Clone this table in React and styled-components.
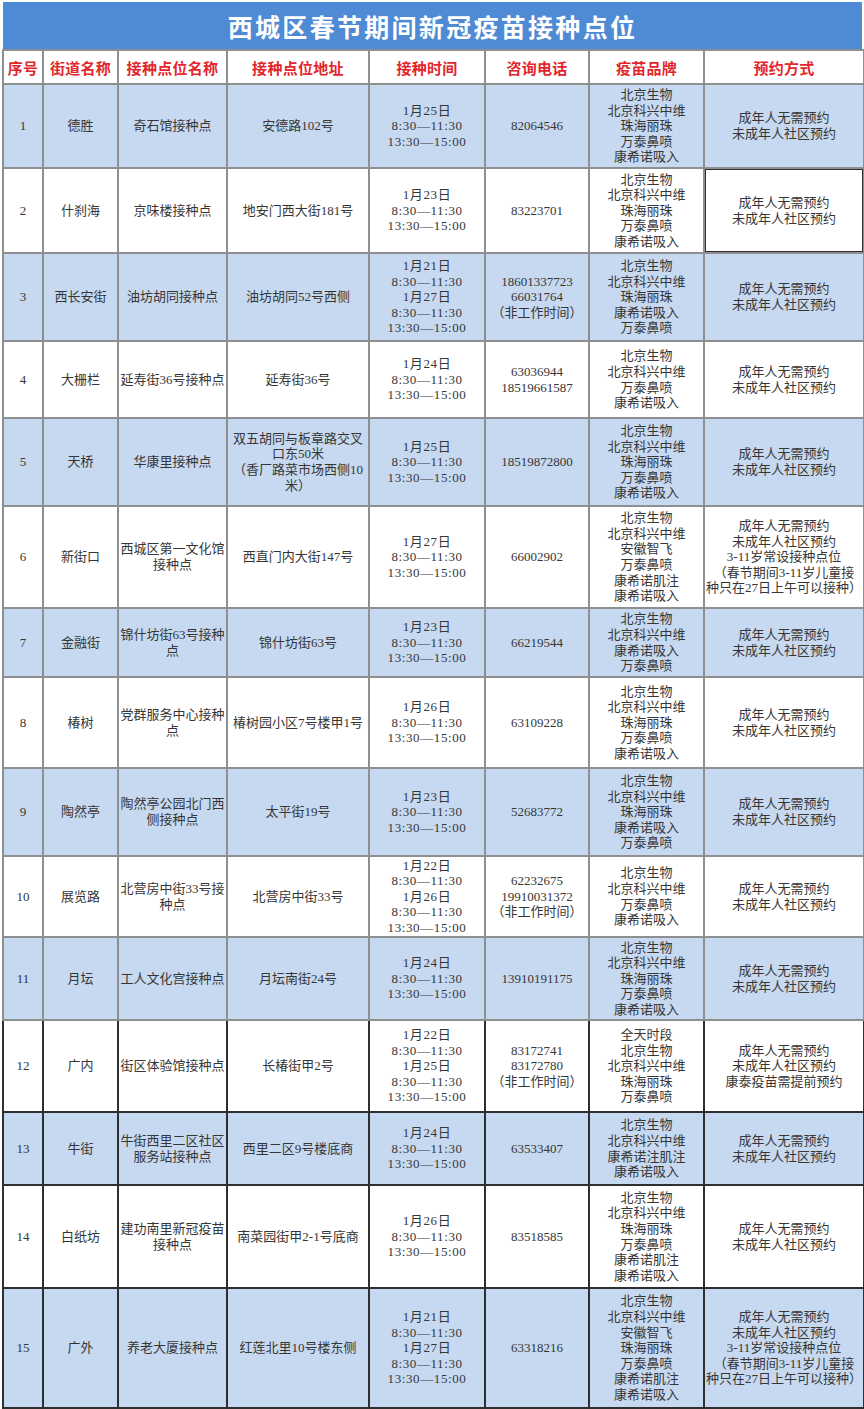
import React from 'react'
import styled, { createGlobalStyle } from 'styled-components'

const GlobalStyle = createGlobalStyle`
    html, body {
        margin: 0;
        padding: 0;
        background: #ffffff;
    }
`

const colors = {
    title: '#4f8ad5',
    head: '#e3262c',
    tint: '#c6d9f0',
    line: '#8d8f91',
    dark: '#2e2f31',
    text: '#363636',
}

const Page = styled.div`
    width: 864px;
    padding: 2px 0 0 2px;
    box-sizing: border-box;
`

const Title = styled.div`
    width: 859px;
    height: 47px;
    margin-left: 1px;
    display: flex;
    align-items: center;
    justify-content: center;
    background: ${colors.title};
    color: #ffffff;
    font-family: "Noto Sans CJK SC", sans-serif;
    font-weight: 700;
    font-size: 25px;
    letter-spacing: 2.3px;
`

const Table = styled.table`
    width: 861px;
    border-collapse: collapse;
    table-layout: fixed;
`

const HeadCell = styled.th`
    height: 32px;
    padding: 0;
    border: 2px solid ${colors.line};
    background: #ffffff;
    color: ${colors.head};
    font-family: "Noto Sans CJK SC", sans-serif;
    font-weight: 700;
    font-size: 15px;
    letter-spacing: 0.3px;
    text-align: center;
    vertical-align: middle;
`

const Cell = styled.td`
    padding: 0;
    border: 2px solid ${props => (props.$dark ? colors.dark : colors.line)};
    background: ${props => (props.$tint ? colors.tint : '#ffffff')};
    box-shadow: ${props => (props.$outlined ? `inset 0 0 0 1px ${colors.dark}` : 'none')};
    color: ${colors.text};
    font-family: "Liberation Serif", "Noto Sans CJK SC", serif;
    font-size: 13px;
    line-height: 15.6px;
    text-align: center;
    vertical-align: middle;
`

const Line = styled.div`
    white-space: nowrap;
    letter-spacing: ${props => (props.$wide ? '0.6px' : '0')};
`

const columns = [
    { label: '序号', width: 40 },
    { label: '街道名称', width: 75 },
    { label: '接种点位名称', width: 109 },
    { label: '接种点位地址', width: 142 },
    { label: '接种时间', width: 116 },
    { label: '咨询电话', width: 104 },
    { label: '疫苗品牌', width: 115 },
    { label: '预约方式', width: 160 },
]

const oneDay = day => [day, '8:30—11:30', '13:30—15:00']
const twoDays = (a, b) => [a, '8:30—11:30', b, '8:30—11:30', '13:30—15:00']

const brands5 = ['北京生物', '北京科兴中维', '珠海丽珠', '万泰鼻喷', '康希诺吸入']
const brands5b = ['北京生物', '北京科兴中维', '珠海丽珠', '康希诺吸入', '万泰鼻喷']
const brands4 = ['北京生物', '北京科兴中维', '万泰鼻喷', '康希诺吸入']
const booking = ['成年人无需预约', '未成年人社区预约']
const bookingKids = [
    '成年人无需预约',
    '未成年人社区预约',
    '3-11岁常设接种点位',
    '（春节期间3-11岁儿童接',
    '种只在27日上午可以接种）',
]

const rows = [
    {
        height: 84, no: '1', street: ['德胜'], site: ['奇石馆接种点'], addr: ['安德路102号'],
        time: oneDay('1月25日'), phone: ['82064546'], brands: brands5, book: booking,
    },
    {
        height: 85, no: '2', street: ['什刹海'], site: ['京味楼接种点'], addr: ['地安门西大街181号'],
        time: oneDay('1月23日'), phone: ['83223701'], brands: brands5, book: booking, outlined: true,
    },
    {
        height: 88, no: '3', street: ['西长安街'], site: ['油坊胡同接种点'], addr: ['油坊胡同52号西侧'],
        time: twoDays('1月21日', '1月27日'), phone: ['18601337723', '66031764', '（非工作时间）'],
        brands: brands5b, book: booking,
    },
    {
        height: 77, no: '4', street: ['大栅栏'], site: ['延寿街36号接种点'], addr: ['延寿街36号'],
        time: oneDay('1月24日'), phone: ['63036944', '18519661587'], brands: brands4, book: booking,
    },
    {
        height: 88, no: '5', street: ['天桥'], site: ['华康里接种点'],
        addr: ['双五胡同与板章路交叉', '口东50米', '（香厂路菜市场西侧10', '米）'],
        time: oneDay('1月25日'), phone: ['18519872800'], brands: brands5, book: booking,
    },
    {
        height: 102, no: '6', street: ['新街口'], site: ['西城区第一文化馆', '接种点'], addr: ['西直门内大街147号'],
        time: oneDay('1月27日'), phone: ['66002902'],
        brands: ['北京生物', '北京科兴中维', '安徽智飞', '万泰鼻喷', '康希诺肌注', '康希诺吸入'],
        book: bookingKids,
    },
    {
        height: 69, no: '7', street: ['金融街'], site: ['锦什坊街63号接种', '点'], addr: ['锦什坊街63号'],
        time: oneDay('1月23日'), phone: ['66219544'],
        brands: ['北京生物', '北京科兴中维', '康希诺吸入', '万泰鼻喷'], book: booking,
    },
    {
        height: 91, no: '8', street: ['椿树'], site: ['党群服务中心接种', '点'], addr: ['椿树园小区7号楼甲1号'],
        time: oneDay('1月26日'), phone: ['63109228'], brands: brands5, book: booking,
    },
    {
        height: 88, no: '9', street: ['陶然亭'], site: ['陶然亭公园北门西', '侧接种点'], addr: ['太平街19号'],
        time: oneDay('1月23日'), phone: ['52683772'], brands: brands5b, book: booking,
    },
    {
        height: 81, no: '10', street: ['展览路'], site: ['北营房中街33号接', '种点'], addr: ['北营房中街33号'],
        time: twoDays('1月22日', '1月26日'), phone: ['62232675', '19910031372', '（非工作时间）'],
        brands: brands4, book: booking,
    },
    {
        height: 83, no: '11', street: ['月坛'], site: ['工人文化宫接种点'], addr: ['月坛南街24号'],
        time: oneDay('1月24日'), phone: ['13910191175'], brands: brands5, book: booking,
    },
    {
        height: 92, no: '12', street: ['广内'], site: ['街区体验馆接种点'], addr: ['长椿街甲2号'],
        time: twoDays('1月22日', '1月25日'), phone: ['83172741', '83172780', '（非工作时间）'],
        brands: ['全天时段', '北京生物', '北京科兴中维', '珠海丽珠', '万泰鼻喷'],
        book: ['成年人无需预约', '未成年人社区预约', '康泰疫苗需提前预约'], dark: true,
    },
    {
        height: 73, no: '13', street: ['牛街'], site: ['牛街西里二区社区', '服务站接种点'], addr: ['西里二区9号楼底商'],
        time: oneDay('1月24日'), phone: ['63533407'],
        brands: ['北京生物', '北京科兴中维', '康希诺注肌注', '康希诺吸入'], book: booking, dark: true,
    },
    {
        height: 103, no: '14', street: ['白纸坊'], site: ['建功南里新冠疫苗', '接种点'], addr: ['南菜园街甲2-1号底商'],
        time: oneDay('1月26日'), phone: ['83518585'],
        brands: ['北京生物', '北京科兴中维', '珠海丽珠', '万泰鼻喷', '康希诺肌注', '康希诺吸入'],
        book: booking, dark: true,
    },
    {
        height: 120, no: '15', street: ['广外'], site: ['养老大厦接种点'], addr: ['红莲北里10号楼东侧'],
        time: twoDays('1月21日', '1月27日'), phone: ['63318216'],
        brands: ['北京生物', '北京科兴中维', '安徽智飞', '珠海丽珠', '万泰鼻喷', '康希诺肌注', '康希诺吸入'],
        book: bookingKids, dark: true,
    },
]

const Lines = ({ items, wide }) => items.map((text, i) => <Line key={i} $wide={wide}>{text}</Line>)

const App = () => (
    <Page>
        <GlobalStyle />
        <Title>西城区春节期间新冠疫苗接种点位</Title>
        <Table>
            <colgroup>
                {columns.map(col => <col key={col.label} style={{ width: col.width }} />)}
            </colgroup>
            <thead>
                <tr>
                    {columns.map(col => <HeadCell key={col.label}>{col.label}</HeadCell>)}
                </tr>
            </thead>
            <tbody>
                {rows.map((row, index) => {
                    const tint = index % 2 === 0
                    const cell = { $tint: tint, $dark: row.dark }
                    return (
                        <tr key={row.no} style={{ height: row.height }}>
                            <Cell {...cell}>{row.no}</Cell>
                            <Cell {...cell}><Lines items={row.street} /></Cell>
                            <Cell {...cell}><Lines items={row.site} /></Cell>
                            <Cell {...cell}><Lines items={row.addr} /></Cell>
                            <Cell {...cell}><Lines items={row.time} wide /></Cell>
                            <Cell {...cell}><Lines items={row.phone} /></Cell>
                            <Cell {...cell}><Lines items={row.brands} /></Cell>
                            <Cell {...cell} $outlined={row.outlined}><Lines items={row.book} /></Cell>
                        </tr>
                    )
                })}
            </tbody>
        </Table>
    </Page>
)

export default App
